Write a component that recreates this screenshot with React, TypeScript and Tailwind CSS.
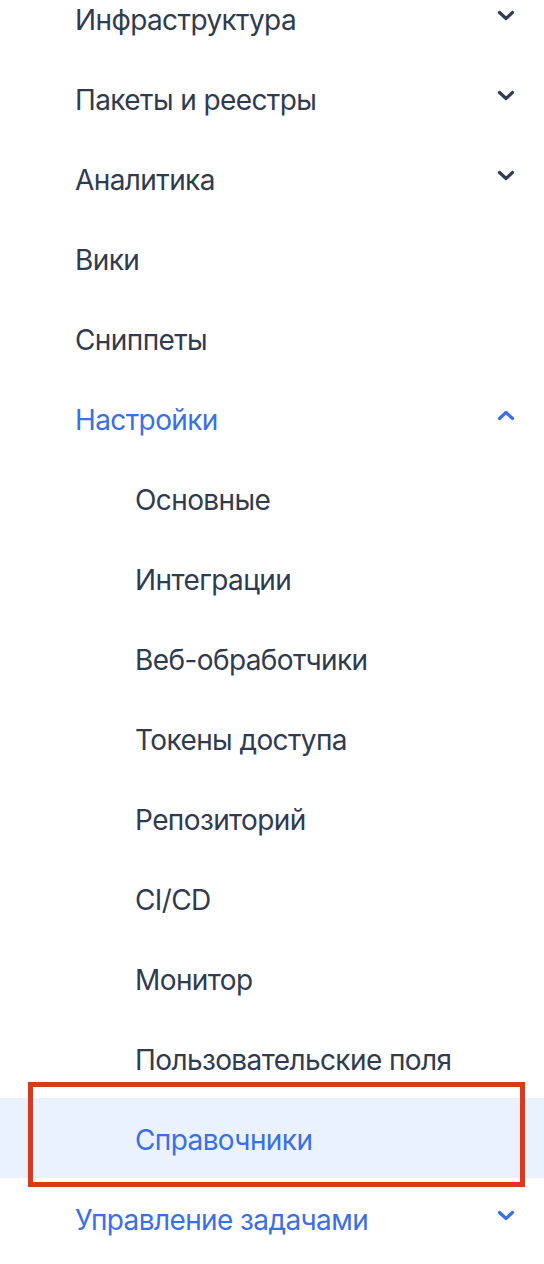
import React from "react";

type Item = {
  label: string;
  level: 0 | 1;
  active?: boolean;
  selected?: boolean;
  chevron?: "down" | "up";
};

const items: Item[] = [
  { label: "Инфраструктура", level: 0, chevron: "down" },
  { label: "Пакеты и реестры", level: 0, chevron: "down" },
  { label: "Аналитика", level: 0, chevron: "down" },
  { label: "Вики", level: 0 },
  { label: "Сниппеты", level: 0 },
  { label: "Настройки", level: 0, active: true, chevron: "up" },
  { label: "Основные", level: 1 },
  { label: "Интеграции", level: 1 },
  { label: "Веб-обработчики", level: 1 },
  { label: "Токены доступа", level: 1 },
  { label: "Репозиторий", level: 1 },
  { label: "CI/CD", level: 1 },
  { label: "Монитор", level: 1 },
  { label: "Пользовательские поля", level: 1 },
  { label: "Справочники", level: 1, active: true, selected: true },
  { label: "Управление задачами", level: 0, active: true, chevron: "down" },
];

function Chevron({ dir, color }: { dir: "down" | "up"; color: string }) {
  return (
    <svg
      width="18"
      height="11"
      viewBox="0 0 18 11"
      fill="none"
      className={dir === "up" ? "rotate-180" : ""}
    >
      <polyline
        points="2.5,2.5 9,8.5 15.5,2.5"
        stroke={color}
        strokeWidth="3.2"
        strokeLinecap="round"
        strokeLinejoin="round"
      />
    </svg>
  );
}

export default function App() {
  return (
    <div
      className="h-[1264px] w-full overflow-hidden bg-white"
      style={{ fontFamily: "Inter, 'Noto Sans', sans-serif" }}
    >
      <ul className="-mt-[22px]">
        {items.map((item) => {
          const color = item.active ? "#3a6fe6" : "#303b4f";
          return (
            <li
              key={item.label}
              className={`relative flex h-20 items-center pr-[29px] ${
                item.level === 0 ? "pl-[75px]" : "pl-[135px]"
              } ${item.selected ? "bg-[#eaf2fd]" : ""}`}
            >
              <span
                className="flex-1 translate-y-[2px] text-[28px] leading-none tracking-[-0.6px]"
                style={{ color }}
              >
                {item.label}
              </span>
              {item.chevron && (
                <span className="-mt-1.5 flex">
                  <Chevron dir={item.chevron} color={color} />
                </span>
              )}
              {/* red annotation frame around the selected entry */}
              {item.selected && (
                <div className="pointer-events-none absolute -top-4 left-[28px] right-[19px] -bottom-[9px] border-[5px] border-[#d63a20]" />
              )}
            </li>
          );
        })}
      </ul>
    </div>
  );
}
